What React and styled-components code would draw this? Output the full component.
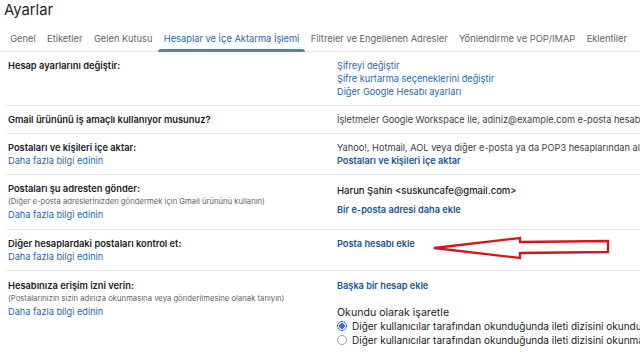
import React from "react";
import styled, { createGlobalStyle } from "styled-components";

const Global = createGlobalStyle`
  html, body { margin: 0; padding: 0; background: #fff; }
  body { font-family: Inter, "Noto Sans", sans-serif; color: #202124; overflow: hidden; }
`;

const Page = styled.div`
  width: 640px;
  height: 358px;
  overflow: hidden;
  background: #fff;
`;

const Title = styled.h1`
  margin: 0;
  padding: 0 0 0 4px;
  height: 24px;
  font-size: 14.8px;
  line-height: 20px;
  font-weight: 400;
  color: #202124;
`;

const Tabs = styled.nav`
  display: flex;
  padding: 0 0 0 4.5px;
  height: 27px;
  border-bottom: 1px solid #e8eaed;
  white-space: nowrap;
`;

const Tab = styled.div`
  position: relative;
  padding: 8px 5.7px 0;
  font-size: 9.3px;
  line-height: 13px;
  color: ${(p) => (p.$active ? "#2a66ad" : "#5f6368")};
  ${(p) =>
    p.$active &&
    `
    &::after {
      content: "";
      position: absolute;
      left: 0; right: 0; bottom: -1px;
      height: 3px;
      border-radius: 3px 3px 0 0;
      background: #4a82bf;
    }
  `}
`;

const Table = styled.div`
  padding-left: 6px;
`;

const Row = styled.div`
  display: grid;
  grid-template-columns: 325px 1fr;
  padding: ${(p) => p.$pad || "7px 0 7px"};
  border-bottom: ${(p) => (p.$last ? "none" : "1px solid #e8eaed")};
  font-size: 9.2px;
  line-height: 13px;
  white-space: nowrap;
`;

const Left = styled.div`
  padding-left: 2px;
  display: flex;
  flex-direction: column;
`;

const Right = styled.div`
  position: relative;
  padding-left: 6px;
  display: flex;
  flex-direction: column;
  align-items: flex-start;
`;

const Label = styled.div`
  font-size: 9.3px;
  font-weight: 600;
  color: #202124;
`;

const Note = styled.div`
  font-size: 7.7px;
  color: #5f6368;
`;

const Link = styled.a`
  color: ${(p) => (p.$strong ? "#1b5299" : "#2a66ad")};
  font-weight: ${(p) => (p.$strong ? 600 : 400)};
  text-decoration: none;
  margin-top: ${(p) => p.$mt || 0}px;
`;

const Plain = styled.div`
  color: ${(p) => p.$c || "#3c4043"};
  font-weight: ${(p) => p.$w || 400};
  margin-top: ${(p) => p.$mt || 0}px;
  font-size: ${(p) => p.$fs || 9.2}px;
`;

const RadioRow = styled.label`
  display: flex;
  align-items: center;
  gap: 5px;
  height: 14px;
  color: #202124;
  font-size: 10px;
`;

const Radio = styled.span`
  box-sizing: border-box;
  width: 10px;
  height: 10px;
  border-radius: 50%;
  border: 1px solid ${(p) => (p.$on ? "#2f6fd6" : "#9aa0a6")};
  background: ${(p) => (p.$on ? "radial-gradient(circle, #2f6fd6 0 2.6px, #fff 3px)" : "#fff")};
  flex: none;
`;

const Arrow = styled.svg`
  position: absolute;
  left: 102px;
  top: 1px;
  overflow: visible;
`;

export default function App() {
  return (
    <Page>
      <Global />
      <Title>Ayarlar</Title>
      <Tabs>
        <Tab>Genel</Tab>
        <Tab>Etiketler</Tab>
        <Tab>Gelen Kutusu</Tab>
        <Tab $active>Hesaplar ve İçe Aktarma İşlemi</Tab>
        <Tab>Filtreler ve Engellenen Adresler</Tab>
        <Tab>Yönlendirme ve POP/IMAP</Tab>
        <Tab>Eklentiler</Tab>
      </Tabs>
      <Table>
        <Row>
          <Left>
            <Label>Hesap ayarlarını değiştir:</Label>
          </Left>
          <Right>
            <Link>Şifreyi değiştir</Link>
            <Link>Şifre kurtarma seçeneklerini değiştir</Link>
            <Link>Diğer Google Hesabı ayarları</Link>
          </Right>
        </Row>
        <Row>
          <Left>
            <Label>Gmail ürününü iş amaçlı kullanıyor musunuz?</Label>
          </Left>
          <Right>
            <Plain>İşletmeler Google Workspace ile, adiniz@example.com e-posta hesabınız</Plain>
          </Right>
        </Row>
        <Row>
          <Left>
            <Label>Postaları ve kişileri içe aktar:</Label>
            <Link>Daha fazla bilgi edinin</Link>
          </Left>
          <Right>
            <Plain>Yahoo!, Hotmail, AOL veya diğer e-posta ya da POP3 hesaplarından alın</Plain>
            <Link $strong>Postaları ve kişileri içe aktar</Link>
          </Right>
        </Row>
        <Row $pad="7px 0 8px">
          <Left>
            <Label>Postaları şu adresten gönder:</Label>
            <Note>(Diğer e-posta adreslerinizden göndermek için Gmail ürününü kullanın)</Note>
            <Link>Daha fazla bilgi edinin</Link>
          </Left>
          <Right>
            <Plain $w={500} $mt={2} $fs={9.5} $c="#202124">Harun Şahin &lt;suskuncafe@gmail.com&gt;</Plain>
            <Link $strong $mt={6}>Bir e-posta adresi daha ekle</Link>
          </Right>
        </Row>
        <Row>
          <Left>
            <Label>Diğer hesaplardaki postaları kontrol et:</Label>
            <Link>Daha fazla bilgi edinin</Link>
          </Left>
          <Right>
            <Link $strong>Posta hesabı ekle</Link>
            <Arrow width="180" height="24" viewBox="0 0 180 24">
              <polygon
                points="1,10 87,0 87,4 175,3 175,14 87,15 87,20"
                fill="none"
                stroke="#d4171d"
                strokeWidth="2.4"
                strokeLinejoin="miter"
              />
            </Arrow>
          </Right>
        </Row>
        <Row $last $pad="8px 0 0">
          <Left>
            <Label>Hesabınıza erişim izni verin:</Label>
            <Note>(Postalarınızın sizin adınıza okunmasına veya gönderilmesine olanak tanıyın)</Note>
            <Link>Daha fazla bilgi edinin</Link>
          </Left>
          <Right>
            <Link $strong>Başka bir hesap ekle</Link>
            <Plain $mt={14} $fs={10.6} $c="#202124">Okundu olarak işaretle</Plain>
            <RadioRow>
              <Radio $on />
              Diğer kullanıcılar tarafından okunduğunda ileti dizisini okundu olarak işaretle
            </RadioRow>
            <RadioRow>
              <Radio />
              Diğer kullanıcılar tarafından okunduğunda ileti dizisini okunmamış olarak bırak
            </RadioRow>
          </Right>
        </Row>
      </Table>
    </Page>
  );
}
